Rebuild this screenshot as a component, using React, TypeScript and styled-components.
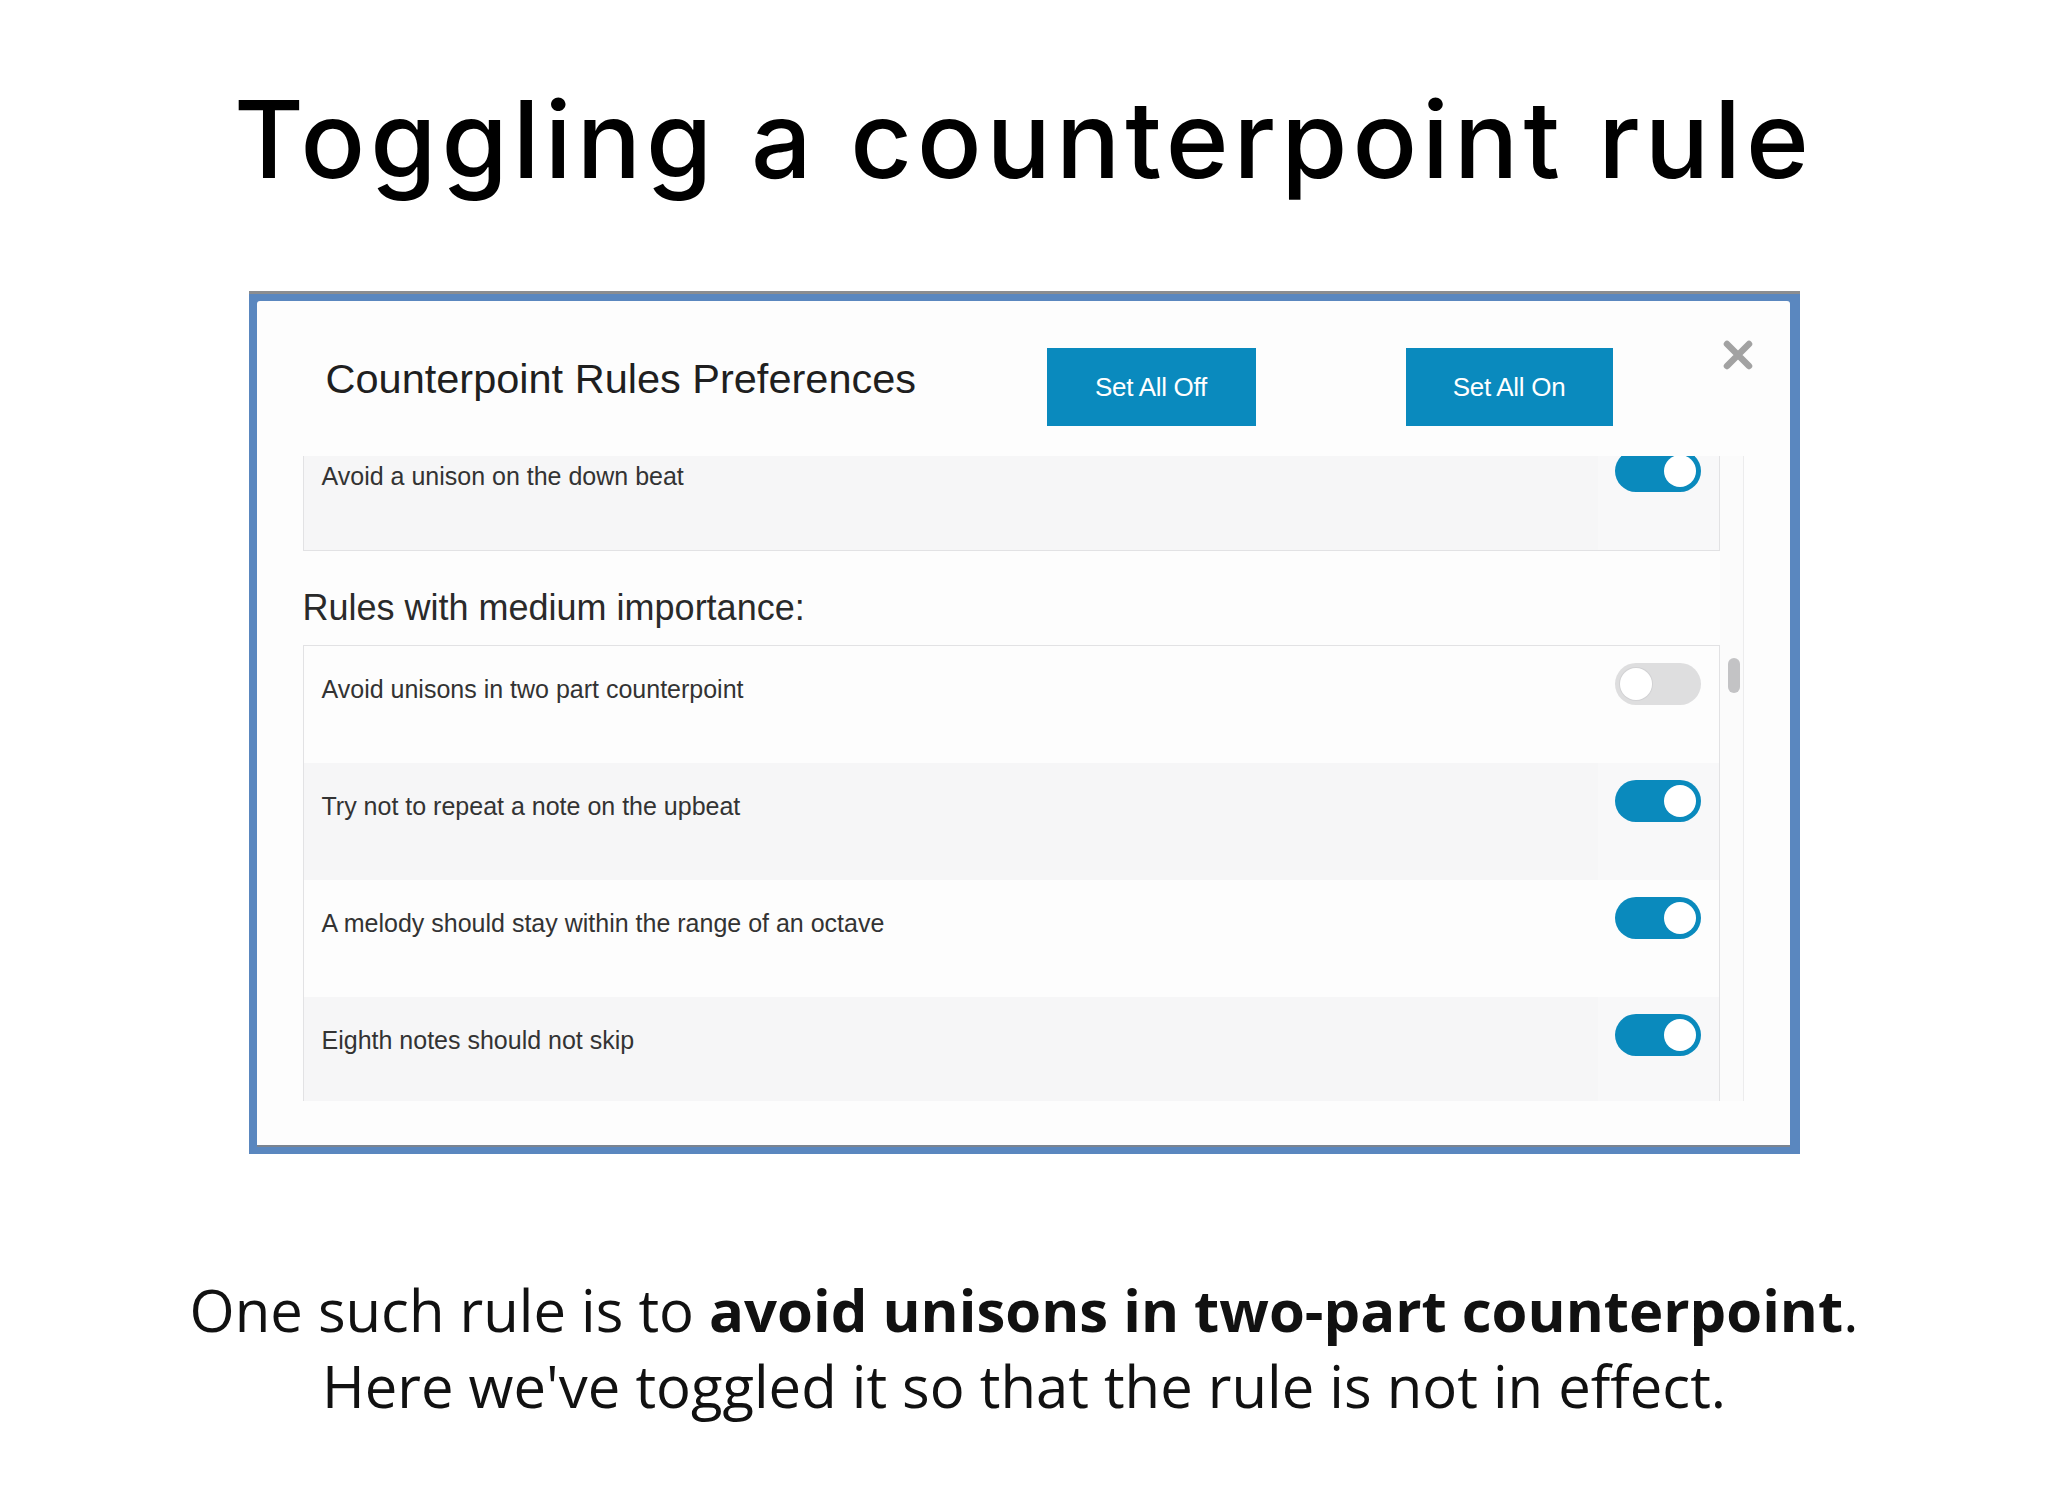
import React, { useLayoutEffect, useRef } from "react";
import styled, { createGlobalStyle } from "styled-components";

const GlobalStyle = createGlobalStyle`
  html, body { margin: 0; padding: 0; background: #ffffff; }
  * { box-sizing: border-box; }
`;

const Page = styled.div`
  width: 2048px;
  min-height: 1494px;
  padding-top: 76px;
  display: flex;
  flex-direction: column;
  align-items: center;
  background: #ffffff;
`;

const SlideTitle = styled.h1`
  margin: 0;
  font-family: Inter, "DejaVu Sans", sans-serif;
  font-weight: 500;
  font-size: 107px;
  line-height: 127px;
  letter-spacing: 5px;
  color: #000;
  text-align: center;
`;

const Frame = styled.div`
  margin-top: 88px;
  width: 1551px;
  height: 863px;
  background: #5a87bf;
  border-top: 3px solid #8b8d90;
  padding: 7px 10px 9px 8px;
  display: flex;
`;

const Modal = styled.div`
  flex: 1;
  display: flex;
  flex-direction: column;
  background: #fdfdfd;
  border-radius: 3px 3px 0 0;
  box-shadow: 0 2px 0 #7b8490;
  font-family: "Liberation Sans", Arial, sans-serif;
`;

const Header = styled.div`
  height: 155px;
  flex: 0 0 155px;
  display: flex;
  align-items: flex-start;
  padding: 0 37px 0 69px;
`;

const ModalTitle = styled.h2`
  margin: 55px 0 0 0;
  flex: 0 0 721px;
  font-size: 41.5px;
  line-height: 46px;
  font-weight: 400;
  color: #1f1f1f;
`;

const ActionButton = styled.button<{ $w: number; $gap?: number }>`
  margin-top: 47px;
  margin-left: ${(p) => p.$gap ?? 0}px;
  width: ${(p) => p.$w}px;
  height: 78px;
  border: none;
  border-radius: 0;
  background: #0a8abe;
  color: #ffffff;
  font-family: "Liberation Sans", Arial, sans-serif;
  font-size: 26px;
  letter-spacing: -0.3px;
  display: flex;
  align-items: center;
  justify-content: center;
  padding: 0;
`;

const CloseButton = styled.button`
  margin-left: auto;
  margin-top: 39px;
  width: 30px;
  height: 30px;
  padding: 0;
  border: none;
  background: transparent;
  display: flex;
`;

const Body = styled.div`
  height: 645px;
  flex: 0 0 645px;
  display: flex;
  padding: 0 46px;
`;

const Viewport = styled.div`
  flex: 1;
  height: 100%;
  overflow: hidden;
`;

const Track = styled.div`
  width: 24px;
  flex: 0 0 24px;
  height: 100%;
  background: #fbfbfb;
  border-right: 1px solid #ececed;
  display: flex;
  flex-direction: column;
  align-items: flex-start;
  padding-left: 8px;
`;

const Thumb = styled.div<{ $top: number }>`
  margin-top: ${(p) => p.$top}px;
  width: 12px;
  height: 35px;
  border-radius: 6px;
  background: #c3c3c5;
`;

const RuleList = styled.div`
  border: 1px solid #e2e2e4;
  display: flex;
  flex-direction: column;
`;

const Row = styled.div<{ $shaded: boolean }>`
  height: 117px;
  display: flex;
  background: ${(p) => (p.$shaded ? "#f6f6f7" : "#fdfdfd")};
`;

const RuleText = styled.div`
  flex: 1;
  padding: 28px 0 0 18px;
  font-size: 25px;
  line-height: 30px;
  color: #333333;
`;

const ToggleCell = styled.div<{ $shaded: boolean }>`
  flex: 0 0 121px;
  padding: 17px 18px 0 17px;
  background: ${(p) => (p.$shaded ? "#f8f8f9" : "#fdfdfd")};
`;

const Switch = styled.div<{ $on: boolean }>`
  width: 86px;
  height: 42px;
  border-radius: 21px;
  background: ${(p) => (p.$on ? "#0a8abd" : "#dededf")};
  display: flex;
  align-items: center;
  justify-content: ${(p) => (p.$on ? "flex-end" : "flex-start")};
  padding: 0 5px;
`;

const Knob = styled.div<{ $on: boolean }>`
  width: 32px;
  height: 32px;
  border-radius: 50%;
  background: #ffffff;
  box-shadow: ${(p) => (p.$on ? "none" : "0 0 0 1px #d2d2d4")};
`;

const GroupHeading = styled.h3`
  margin: 37px 0 17px 0;
  font-size: 36px;
  line-height: 40px;
  font-weight: 400;
  color: #2a2a2a;
`;

const Caption = styled.p`
  margin: 118px 0 0 0;
  font-family: "Open Sans", "Noto Sans", sans-serif;
  font-size: 58px;
  line-height: 76px;
  color: #111111;
  text-align: center;
  font-weight: 400;
`;

const Strong = styled.strong`
  font-weight: 700;
`;

type Rule = { text: string; on: boolean };

const topRules: Rule[] = [{ text: "Avoid a unison on the down beat", on: true }];

const mediumRules: Rule[] = [
  { text: "Avoid unisons in two part counterpoint", on: false },
  { text: "Try not to repeat a note on the upbeat", on: true },
  { text: "A melody should stay within the range of an octave", on: true },
  { text: "Eighth notes should not skip", on: true },
];

const RuleRow: React.FC<{ rule: Rule; shaded: boolean }> = ({ rule, shaded }) => (
  <Row $shaded={shaded}>
    <RuleText>{rule.text}</RuleText>
    <ToggleCell $shaded={shaded}>
      <Switch $on={rule.on}>
        <Knob $on={rule.on} />
      </Switch>
    </ToggleCell>
  </Row>
);

const CloseIcon = () => (
  <svg width="30" height="30" viewBox="0 0 30 30">
    <path d="M4 4 L26 26 M26 4 L4 26" stroke="#a2a2a2" strokeWidth="6.5" strokeLinecap="round" />
  </svg>
);

export default function App() {
  const viewportRef = useRef<HTMLDivElement>(null);
  useLayoutEffect(() => {
    if (viewportRef.current) viewportRef.current.scrollTop = 24;
  }, []);

  return (
    <>
      <GlobalStyle />
      <Page>
        <SlideTitle>Toggling a counterpoint rule</SlideTitle>
        <Frame>
          <Modal>
            <Header>
              <ModalTitle>Counterpoint Rules Preferences</ModalTitle>
              <ActionButton $w={209}>Set All Off</ActionButton>
              <ActionButton $w={207} $gap={150}>Set All On</ActionButton>
              <CloseButton aria-label="Close">
                <CloseIcon />
              </CloseButton>
            </Header>
            <Body>
              <Viewport ref={viewportRef}>
                <RuleList>
                  {topRules.map((r) => (
                    <RuleRow key={r.text} rule={r} shaded={true} />
                  ))}
                </RuleList>
                <GroupHeading>Rules with medium importance:</GroupHeading>
                <RuleList>
                  {mediumRules.map((r, i) => (
                    <RuleRow key={r.text} rule={r} shaded={i % 2 === 1} />
                  ))}
                </RuleList>
              </Viewport>
              <Track>
                <Thumb $top={202} />
              </Track>
            </Body>
          </Modal>
        </Frame>
        <Caption>
          One such rule is to <Strong>avoid unisons in two-part counterpoint</Strong>.
          <br />
          Here we've toggled it so that the rule is not in effect.
        </Caption>
      </Page>
    </>
  );
}
